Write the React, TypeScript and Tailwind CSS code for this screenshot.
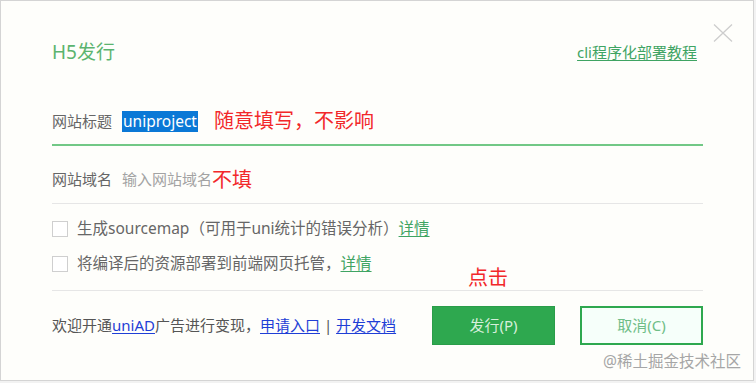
const font = { fontFamily: '"Noto Sans", "Noto Sans CJK SC", sans-serif' }

function Checkbox() {
  return <span className="w-[16px] h-[16px] border border-[#cfcfcf] bg-white shrink-0" />
}

export default function App() {
  return (
    <div className="w-[756px] h-[383px] bg-[#f2f2f2]" style={font}>
      <div className="relative w-[754px] h-[381px] border border-[#d4d4d4] bg-[#fefefb] px-[50px] pl-[51px] flex flex-col">
        {/* close */}
        <svg className="absolute left-[712px] top-[23px]" width="20" height="18" viewBox="0 0 20 18">
          <path d="M1 0.5 L19 17.5 M19 0.5 L1 17.5" stroke="#cdcdcd" strokeWidth="1.3" fill="none" />
        </svg>

        <div className="mt-[37px] h-[28px] flex items-center justify-between">
          <span className="text-[19px] text-[#5bb46f] leading-none">H5发行</span>
          <a className="text-[15px] text-[#3fa463] underline underline-offset-2 leading-none mr-[6px]">cli程序化部署教程</a>
        </div>

        <div className="mt-[40px] h-[40px] border-b-2 border-[#72c886] flex items-center pb-[8px]">
          <span className="text-[15px] text-[#666] w-[70px]">网站标题</span>
          <span className="bg-[#0a78d6] text-white text-[15.5px] leading-[21px] h-[21px] px-[1px]">uniproject</span>
          <span className="text-[20px] text-[#f2282a] ml-[16px] leading-none">随意填写，不影响</span>
        </div>

        <div className="h-[58px] border-b border-[#e6e6e6] flex items-center pt-[10px]">
          <span className="text-[15px] text-[#666] w-[70px]">网站域名</span>
          <span className="text-[15px] text-[#a3a3a3]">输入网站域名</span>
          <span className="text-[20px] text-[#f2282a] leading-none">不填</span>
        </div>

        <div className="relative h-[87px] border-b border-[#e6e6e6] flex flex-col pt-[17px] gap-[19px]">
          <div className="flex items-center gap-[9px] h-[16px]">
            <Checkbox />
            <span className="text-[15.5px] text-[#666]">
              生成sourcemap（可用于uni统计的错误分析）<a className="text-[#3fa463] underline underline-offset-2">详情</a>
            </span>
          </div>
          <div className="flex items-center gap-[9px] h-[16px]">
            <Checkbox />
            <span className="text-[15.5px] text-[#666]">
              将编译后的资源部署到前端网页托管，<a className="text-[#3fa463] underline underline-offset-2">详情</a>
            </span>
          </div>
          <span className="absolute left-[416px] top-[64px] text-[20px] text-[#f2282a] leading-none">点击</span>
        </div>

        <div className="mt-[15px] flex items-center h-[39px]">
          <span className="text-[15px] text-[#555] flex-1">
            欢迎开通<a className="text-[#1f3fd6] underline underline-offset-2">uniAD</a>广告进行变现，<a className="text-[#1f3fd6] underline underline-offset-2">申请入口</a> | <a className="text-[#1f3fd6] underline underline-offset-2">开发文档</a>
          </span>
          <button className="w-[123px] h-[39px] bg-[#2ea84f] border border-[#2a9d49] text-[15px] text-[#d6efdb]">发行(P)</button>
          <button className="ml-[25px] w-[123px] h-[39px] bg-[#f6fffa] border-2 border-[#2ea84f] text-[15px] text-[#6fbd86]">取消(C)</button>
        </div>

        <div className="mt-[9px] self-end mr-[-38px] text-[15.5px] text-[#a6a6a6] leading-none">@稀土掘金技术社区</div>
      </div>
    </div>
  )
}
